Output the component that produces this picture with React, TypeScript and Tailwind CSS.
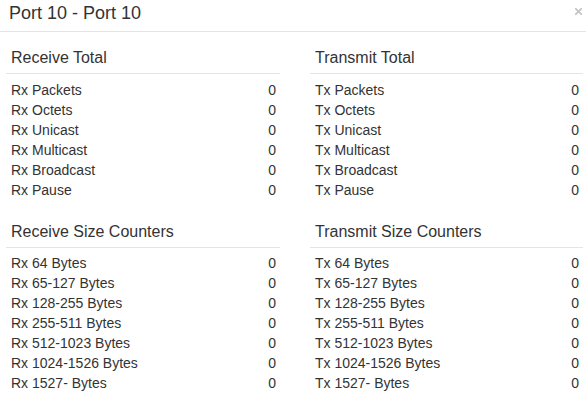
const rxTotal = ['Rx Packets', 'Rx Octets', 'Rx Unicast', 'Rx Multicast', 'Rx Broadcast', 'Rx Pause']
const txTotal = ['Tx Packets', 'Tx Octets', 'Tx Unicast', 'Tx Multicast', 'Tx Broadcast', 'Tx Pause']
const sizes = ['64 Bytes', '65-127 Bytes', '128-255 Bytes', '255-511 Bytes', '512-1023 Bytes', '1024-1526 Bytes', '1527- Bytes']

function Section({ title, rows, last }: { title: string; rows: string[]; last?: boolean }) {
  return (
    <div>
      <div className="border-b border-[#e5e5e5] pb-[5px] pl-[5px] text-[16px] leading-[20px]">{title}</div>
      <div className={last ? 'pt-[5px]' : 'pt-[6px] pb-[22px]'}>
        {rows.map((r) => (
          <div key={r} className="flex h-[20px] items-center justify-between pl-[5px] pr-[4px] text-[14px] leading-[20px]">
            <span>{r}</span>
            <span>0</span>
          </div>
        ))}
      </div>
    </div>
  )
}

export default function App() {
  return (
    <div className="h-[402px] w-[586px] overflow-hidden bg-white text-[#333] font-['Liberation_Sans',Arial,sans-serif]">
      {/* header */}
      <div className="flex h-[32px] items-start justify-between border-b border-[#e5e5e5] pl-[9px] pr-[4px] pt-[3px]">
        <h4 className="text-[18px] leading-[20px]">Port 10 - Port 10</h4>
        <svg width="7" height="7" viewBox="0 0 7 7" className="mt-[5px]">
          <path d="M0.8 0.8 L6.2 6.2 M6.2 0.8 L0.8 6.2" stroke="#c4c4c4" strokeWidth="1.8" strokeLinecap="square" />
        </svg>
      </div>

      {/* body */}
      <div className="grid grid-cols-[274px_273px] gap-x-[30px] pl-[6px] pt-[16px]">
        <div>
          <Section title="Receive Total" rows={rxTotal} />
          <Section title="Receive Size Counters" rows={sizes.map((s) => 'Rx ' + s)} last />
        </div>
        <div>
          <Section title="Transmit Total" rows={txTotal} />
          <Section title="Transmit Size Counters" rows={sizes.map((s) => 'Tx ' + s)} last />
        </div>
      </div>
    </div>
  )
}
